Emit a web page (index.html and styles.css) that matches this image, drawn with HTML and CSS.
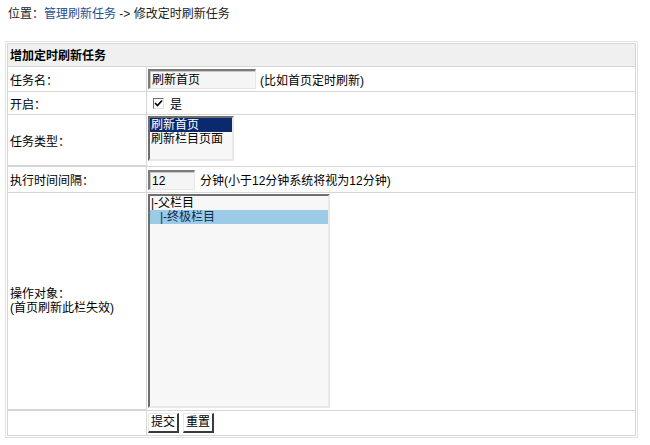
FILE: index.html
```html
<!DOCTYPE html>
<html lang="zh-CN">
<head>
<meta charset="utf-8">
<title>修改定时刷新任务</title>
<link rel="stylesheet" href="styles.css">
</head>
<body>
<div class="crumb">位置：<a class="crumb-link" href="#">管理刷新任务</a> -&gt; 修改定时刷新任务</div>
<div class="frame">
  <div class="grid">
    <div class="cell head">增加定时刷新任务</div>

    <div class="cell label r1">任务名：</div>
    <div class="cell value r1">
      <span class="input name-input">刷新首页</span>
      <span class="hint">(比如首页定时刷新)</span>
    </div>

    <div class="cell label r2">开启：</div>
    <div class="cell value r2">
      <span class="checkbox"><svg width="11" height="11" viewBox="0 0 11 11"><path d="M2 5 L4.5 7.5 L9 2.5" fill="none" stroke="#000" stroke-width="1.6"/></svg></span>
      <span class="yes">是</span>
    </div>

    <div class="cell label r3">任务类型：</div>
    <div class="cell value r3">
      <div class="listbox type-list">
        <div class="opt sel-dark">刷新首页</div>
        <div class="opt">刷新栏目页面</div>
      </div>
    </div>

    <div class="cell label r4">执行时间间隔：</div>
    <div class="cell value r4">
      <span class="input num-input">12</span>
      <span class="hint2">分钟(小于12分钟系统将视为12分钟)</span>
    </div>

    <div class="cell label r5">
      <div>操作对象：</div>
      <div>(首页刷新此栏失效)</div>
    </div>
    <div class="cell value r5">
      <div class="listbox tree-list">
        <div class="opt">|-父栏目</div>
        <div class="opt sel-light"><span class="indent">|-终极栏目</span></div>
      </div>
    </div>

    <div class="cell label r6"></div>
    <div class="cell value r6">
      <span class="btn">提交</span>
      <span class="btn">重置</span>
    </div>
  </div>
</div>
</body>
</html>
```

FILE: styles.css
```css
html, body {
  margin: 0;
  padding: 0;
  background: #fff;
}
body {
  font-family: "Liberation Sans", "Noto Sans CJK SC", sans-serif;
  font-size: 12px;
  color: #000;
  padding: 6px 5px 0 5px;
  width: 633px;
}
.crumb {
  height: 16px;
  line-height: 16px;
  padding-left: 3px;
  color: #222;
}
.crumb-link {
  color: #1d4f8f;
  text-decoration: none;
}
.frame {
  margin-top: 19px;
  border: 1px solid #e2e2e2;
  padding: 1px;
  background: #fff;
}
.grid {
  display: grid;
  grid-template-columns: 138px 1fr;
  gap: 1px;
  background: #d6d6d6;
  border: 1px solid #d6d6d6;
}
.cell {
  background: #fff;
  display: flex;
  align-items: center;
  padding: 0 2px;
}
.head {
  grid-column: 1 / span 2;
  background: #f0f0f0;
  font-weight: bold;
  height: 22px;
  padding-bottom: 2px;
  box-sizing: border-box;
}
.label {
  padding-left: 2px;
}
.r5.label {
  flex-direction: column;
  align-items: flex-start;
  justify-content: center;
  line-height: 14px;
}
.r1 { height: 24px; }
.r2 { height: 22px; }
.r3 { height: 50px; }
.r4 { height: 25px; }
.r5 { height: 216px; }
.r6 { height: 24px; }
.value {
  padding-left: 1px;
}
.r5.value, .r3.value {
  align-items: flex-start;
  padding-top: 1px;
}
.input {
  display: inline-block;
  box-sizing: border-box;
  height: 20px;
  line-height: 16px;
  padding: 1px 2px;
  background: #f5f5f5;
  border-top: 2px solid #7b7b7b;
  border-left: 2px solid #7b7b7b;
  border-right: 1px solid #e6e6e6;
  border-bottom: 1px solid #e6e6e6;
  box-shadow: inset 1px 1px 0 #c8c8c8;
}
.name-input { width: 108px; }
.num-input { width: 47px; }
.hint { margin-left: 4px; }
.hint2 { margin-left: 5px; }
.checkbox {
  display: inline-block;
  box-sizing: border-box;
  width: 11px;
  height: 11px;
  margin-left: 5px;
  border-top: 1px solid #6d6d6d;
  border-left: 1px solid #6d6d6d;
  border-right: 1px solid #e0e0e0;
  border-bottom: 1px solid #e0e0e0;
  background: #fff;
  position: relative;
}
.checkbox svg {
  position: absolute;
  left: -1px;
  top: -1px;
}
.yes { margin-left: 6px; }
.listbox {
  box-sizing: border-box;
  background: #f7f7f7;
  border-top: 2px solid #6e6e6e;
  border-left: 2px solid #6e6e6e;
  border-right: 2px solid #e8e8e8;
  border-bottom: 2px solid #e8e8e8;
}
.type-list {
  width: 86px;
  height: 45px;
}
.tree-list {
  width: 182px;
  height: 214px;
}
.opt {
  height: 14px;
  line-height: 14px;
  white-space: nowrap;
  padding-left: 1px;
  color: #000;
}
.sel-dark {
  background: #0b2a6e;
  color: #fff;
}
.sel-light {
  background: #9ccbe8;
  color: #0f2b4a;
}
.indent {
  padding-left: 9px;
}
.btn {
  display: inline-block;
  box-sizing: border-box;
  height: 20px;
  line-height: 17px;
  width: 31px;
  text-align: center;
  background: #fff;
  border-top: 1px solid #e8e8e8;
  border-left: 1px solid #e8e8e8;
  border-right: 2px solid #3a3a3a;
  border-bottom: 2px solid #3a3a3a;
  margin-right: 4px;
}
```
